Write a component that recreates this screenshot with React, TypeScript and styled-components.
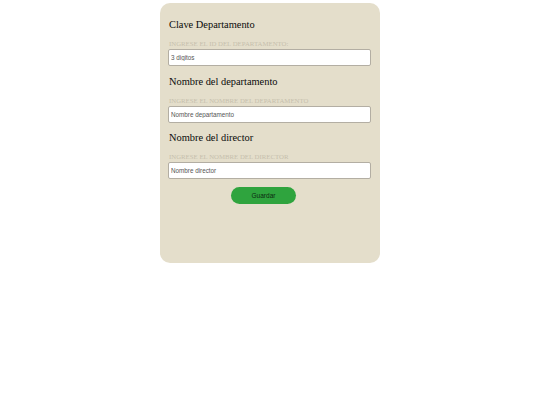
import React from "react";
import styled, { createGlobalStyle } from "styled-components";

const Global = createGlobalStyle`
  html, body { margin: 0; padding: 0; background: #ffffff; }
  body { font-family: "Liberation Serif", "Times New Roman", serif; }
  * { box-sizing: border-box; }
`;

const Page = styled.div`
  display: flex;
  justify-content: center;
  padding-top: 3px;
`;

const Card = styled.form`
  width: 220px;
  height: 260px;
  background: #e4decb;
  border-radius: 10px;
  padding: 15px 8px 0 8px;
  display: flex;
  flex-direction: column;
`;

const Section = styled.div`
  display: flex;
  flex-direction: column;
  margin-bottom: 8.5px;
`;

const Heading = styled.h2`
  margin: 0;
  font-family: "Liberation Serif", "Times New Roman", serif;
  font-weight: normal;
  font-size: 10.4px;
  line-height: 14px;
  color: #0a0a0a;
  padding-left: 1px;
`;

const Label = styled.label`
  margin-top: 8px;
  font-family: "Liberation Serif", "Times New Roman", serif;
  font-size: 6.8px;
  line-height: 8px;
  text-transform: uppercase;
  color: #c6bead;
  padding-left: 1px;
  white-space: nowrap;
`;

const Input = styled.input`
  margin: 1px 0 0 0;
  width: 203px;
  height: 17px;
  border: 1px solid #b3aea3;
  border-radius: 2px;
  background: #fff;
  padding: 0 2px;
  font-family: "Liberation Sans", Arial, sans-serif;
  font-size: 6.3px;
  color: #333;
  outline: none;
  &::placeholder { color: #555; }
`;

const Button = styled.button`
  align-self: flex-start;
  margin: -1px 0 0 63px;
  width: 65px;
  height: 17px;
  border: none;
  border-radius: 9px;
  background: #2fa43e;
  color: #0c2a10;
  font-family: "Liberation Sans", Arial, sans-serif;
  font-size: 6.5px;
  cursor: pointer;
`;

const fields = [
  { title: "Clave Departamento", label: "Ingrese el ID del departamento:", ph: "3 digitos" },
  { title: "Nombre del departamento", label: "Ingrese el nombre del departamento", ph: "Nombre departamento" },
  { title: "Nombre del director", label: "Ingrese el nombre del director", ph: "Nombre director" },
];

export default function App() {
  return (
    <>
      <Global />
      <Page>
        <Card onSubmit={(e) => e.preventDefault()}>
          {fields.map((f) => (
            <Section key={f.title}>
              <Heading>{f.title}</Heading>
              <Label>{f.label}</Label>
              <Input placeholder={f.ph} />
            </Section>
          ))}
          <Button type="submit">Guardar</Button>
        </Card>
      </Page>
    </>
  );
}
